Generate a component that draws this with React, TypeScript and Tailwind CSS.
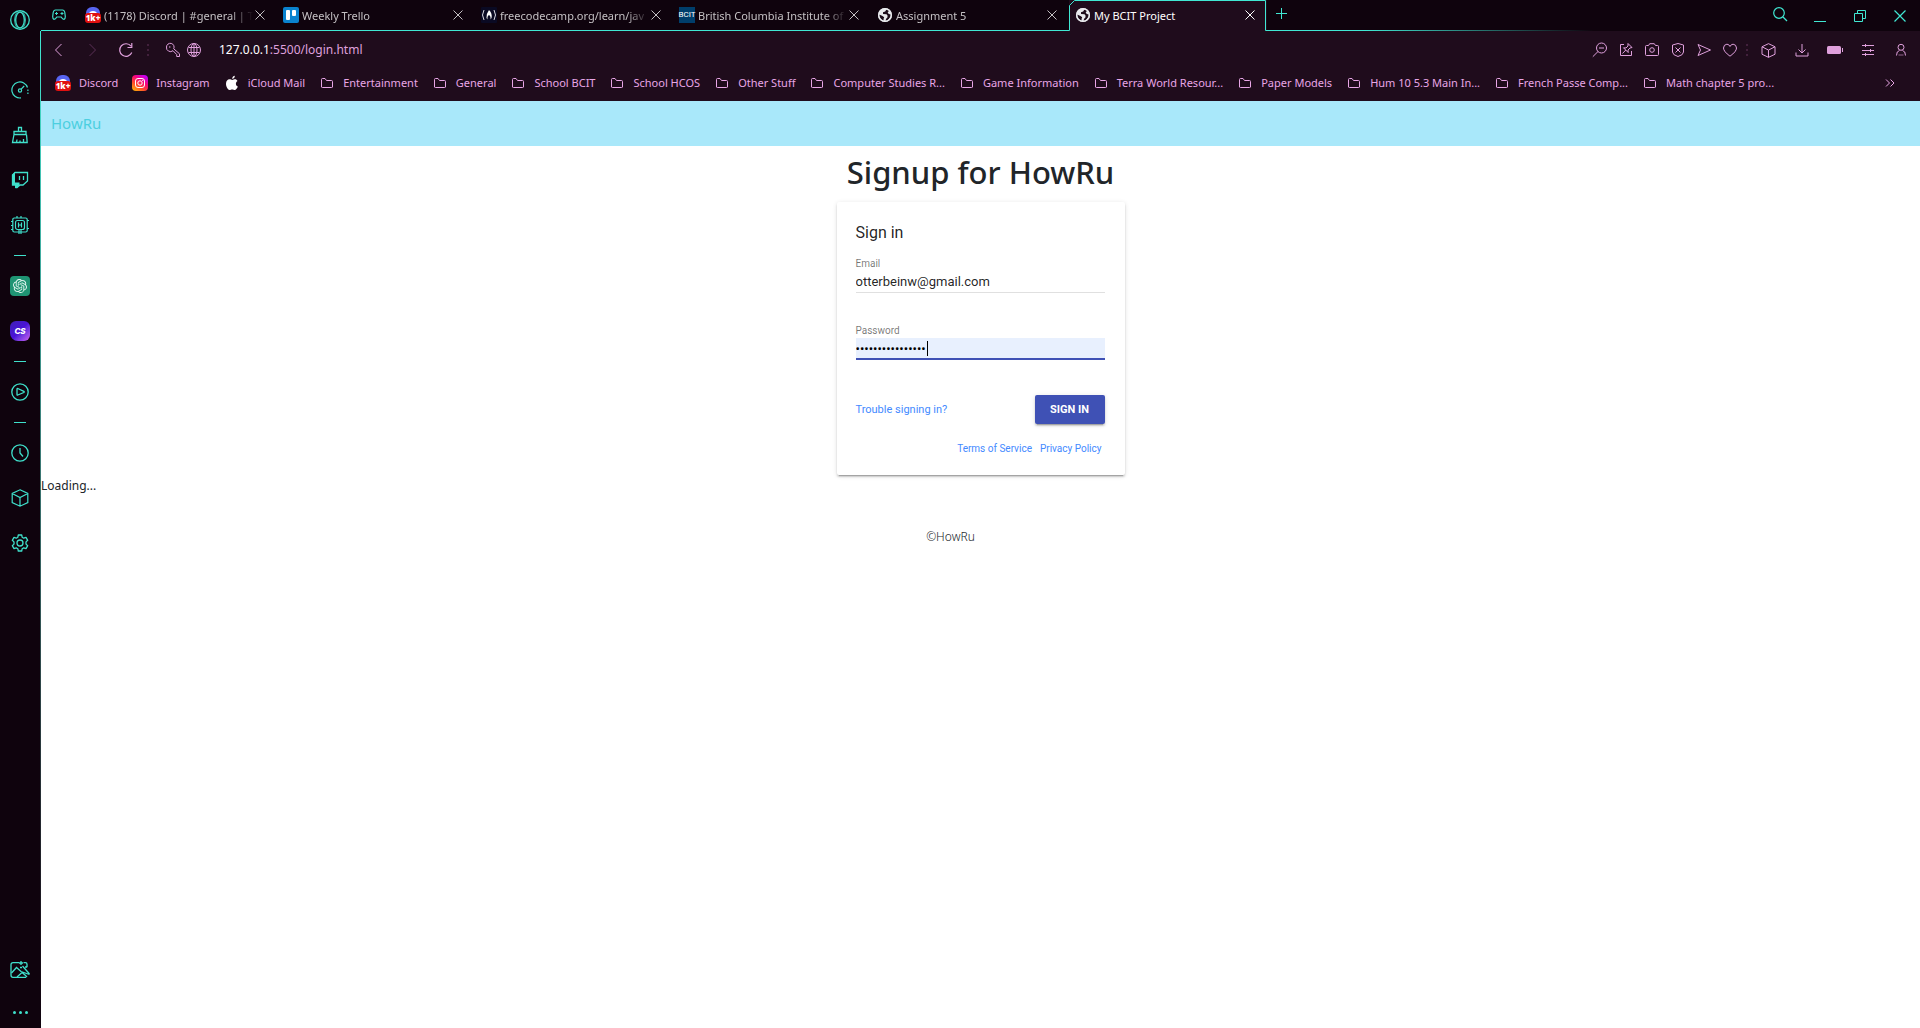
import React, { useState } from "react";
import { SiOpenai } from "react-icons/si";

type IconProps = { children: React.ReactNode; w?: number; h?: number; className?: string; sw?: number };

function Svg({ children, w = 16, h = 16, className = "", sw = 1 }: IconProps) {
  return (
    <svg
      width={w}
      height={h}
      viewBox={`0 0 ${w} ${h}`}
      fill="none"
      stroke="currentColor"
      strokeWidth={sw}
      className={`shrink-0 ${className}`}
      aria-hidden="true"
    >
      {children}
    </svg>
  );
}

/* ---------- Favicons ---------- */

function DiscordBadge() {
  return (
    <span className="relative block h-4 w-4 shrink-0">
      <Svg>
        <rect x="1" y="0" width="14" height="14" rx="6" fill="#5865f2" stroke="none" />
        <path d="M4 6.500Q4.500 4 8 4t4 2.500z" fill="#fff" stroke="none" />
        <rect x="0" y="6" width="16" height="10" rx="3" fill="#e01010" stroke="none" />
      </Svg>
      <span className="absolute inset-x-0 bottom-0 text-center font-['Open_Sans',sans-serif] text-[8px] leading-[10px] font-extrabold text-white">
        1k+
      </span>
    </span>
  );
}

function TrelloIcon() {
  return (
    <Svg>
      <rect width="16" height="16" rx="2" fill="#0a83cf" stroke="none" />
      <rect x="3" y="3" width="4" height="10" rx="1" fill="#fff" stroke="none" />
      <rect x="9" y="3" width="4" height="6" rx="1" fill="#fff" stroke="none" />
    </Svg>
  );
}

function CampIcon() {
  return (
    <Svg>
      <rect width="16" height="16" rx="1" fill="#0a0a23" stroke="none" />
      <path d="M3 3Q0 8 3 13M13 3q3 5 0 10" stroke="#dcdce4" />
      <path d="M8 3q3.500 3.500 2.500 8l-1 1.500Q10 9 8 8q-2 1-1.500 4.500L5.500 11Q5 7 8 3z" fill="#fff" stroke="none" />
    </Svg>
  );
}

function BcitIcon() {
  return (
    <span className="flex h-4 w-4 shrink-0 items-center justify-center bg-[#003e6b] font-['Roboto',sans-serif] text-[8px] leading-4 text-white">
      BCIT
    </span>
  );
}

function WorldIcon() {
  return (
    <Svg>
      <circle cx="8" cy="8" r="7" fill="#e8eaed" stroke="none" />
      <path
        d="M9.500 2.200 8.200 4.500 6 5.200V7l3.500.2 1 1.300v1.800L9 12l-.4 2 2.200-.8L13.500 10l.4-2.500-2-.4-1.200-1.400.8-1.400 1-.3Q11.200 2.700 9.500 2.200zM2.200 7.500 5.500 9l1.700 1.200L6.500 12l.3 1.800Q3 12.600 2.200 9z"
        fill="#1d0d1b"
        stroke="none"
      />
      <circle cx="8" cy="8" r="6.300" stroke="#e8eaed" strokeWidth="1.400" />
    </Svg>
  );
}

function InstagramIcon() {
  return (
    <Svg>
      <defs>
        <linearGradient id="insta" x1="0" y1="1" x2="0.700" y2="0">
          <stop offset="0" stopColor="#ffc400" />
          <stop offset="0.400" stopColor="#ff4a2c" />
          <stop offset="0.700" stopColor="#f5067a" />
          <stop offset="1" stopColor="#c800f0" />
        </linearGradient>
      </defs>
      <rect width="16" height="16" rx="4" fill="url(#insta)" stroke="none" />
      <rect x="3.500" y="3.500" width="9" height="9" rx="2.500" stroke="#fff" />
      <circle cx="8" cy="8" r="2.200" stroke="#fff" />
      <circle cx="10.700" cy="5.300" r="0.600" fill="#fff" stroke="none" />
    </Svg>
  );
}

function AppleIcon() {
  return (
    <Svg className="text-white">
      <path
        d="M11.200 4.200c-1.200 0-1.900.7-2.900.7s-1.700-.7-2.800-.7C3.700 4.200 2 5.800 2 8.800 2 11.800 4 15 5.600 15c.9 0 1.400-.6 2.600-.6s1.600.6 2.500.6c1.300 0 2.700-2 3.100-3.500-1.200-.5-1.900-1.500-1.900-2.800 0-1.200.6-2.100 1.600-2.800-.6-1.100-1.500-1.700-2.300-1.700zM10.800.8C9.300 1 8.100 2.400 8.200 3.900c1.500 0 2.700-1.500 2.600-3.100z"
        fill="currentColor"
        stroke="none"
      />
    </Svg>
  );
}

function FolderIcon() {
  return (
    <Svg>
      <path d="M2.500 12V4.500q0-1 1-1H6l1.500 2h5q1 0 1 1V12q0 .5-1 .5h-9q-1 0-1-.5z" />
    </Svg>
  );
}

/* ---------- Shared line icons ---------- */

function CubeIcon({ s = 16 }: { s?: number }) {
  return (
    <svg width={s} height={s} viewBox="0 0 18 18" fill="none" stroke="currentColor" strokeWidth="1.200" className="shrink-0" aria-hidden="true">
      <path d="M9 .8 16.800 4.500v9L9 17.200 1.200 13.500v-9zM1.200 4.500 9 8.500l7.800-4M9 8.500v8.700" />
    </svg>
  );
}

/* ---------- Sidebar ---------- */

function SideButton({ label, children }: { label: string; children: React.ReactNode }) {
  return (
    <button type="button" aria-label={label} className="flex h-[45px] w-full shrink-0 items-center justify-center">
      {children}
    </button>
  );
}

function Divider() {
  return (
    <div className="flex h-4 shrink-0 items-center justify-center">
      <div className="h-px w-3 bg-[#3fe0cb]" />
    </div>
  );
}

function Sidebar() {
  return (
    <aside className="flex w-10 shrink-0 flex-col bg-[#0f030d] text-[#3fe0cb]">
      <button type="button" aria-label="Opera menu" className="flex h-10 shrink-0 items-center justify-center">
        <Svg w={20} h={20} sw={1.3}>
          <circle cx="10" cy="10" r="9.300" />
          <ellipse cx="10" cy="10" rx="4.300" ry="8" />
          <path d="M8 .9Q4.500 4 4.500 10T8 19.100M12 .9Q15.500 4 15.500 10T12 19.100" strokeWidth="0.800" />
        </Svg>
      </button>
      <nav aria-label="Sidebar" className="flex flex-1 flex-col pt-[27px]">
        <SideButton label="GX Control">
          <Svg w={18} h={18} sw={1.2}>
            <path d="M10 16.900A8 8 0 1 1 16.500 6.500" />
            <path d="M16.900 8.500v5" strokeDasharray="1.500 1.500" />
            <circle cx="9" cy="9.500" r="1.600" />
            <path d="m10.200 8.200 3-3.200" />
          </Svg>
        </SideButton>
        <SideButton label="GX Cleaner">
          <Svg w={18} h={18} sw={1.3}>
            <path d="M7.500 5V1.500h3V5M3 8.500V5.500h12v3zM3 8.500 1.500 16.500h14.700L15.500 8.500M5.500 16.500l.5-3M9 16.500v-2M12.500 16.500V13" />
          </Svg>
        </SideButton>
        <SideButton label="Twitch">
          <Svg w={18} h={18} sw={1.3}>
            <path d="M4 1.500h12.500v8.500L12 14H9l-3 2.500H5V14H1.500V4z" />
            <path d="M1 4 4 1v10.500h4.500V14L6 17H4v-3H1z" fill="currentColor" stroke="none" />
            <path d="M8.500 5v4M12.500 5v4" />
          </Svg>
        </SideButton>
        <SideButton label="GX Mods">
          <Svg w={18} h={18} sw={1.2}>
            <rect x="1.800" y="2" width="14.400" height="14" rx="1.500" />
            <rect x="4.500" y="4.500" width="9" height="9" rx="2" />
            <path d="M7.500 6.500v5M10.500 6.500v5M7.500 9h3M6 0v2M10 0v2M0 5.500h2M0 9.500h2M0 13.500h2M16 4.500h2M16 12.500h2M8 13.500V18M10 13.500V18" />
          </Svg>
        </SideButton>
        <Divider />
        <SideButton label="ChatGPT">
          <span className="flex h-5 w-5 items-center justify-center rounded-[4px] bg-[#1f9473] text-[#e4f6f0]">
            <SiOpenai size={14} aria-hidden="true" />
          </span>
        </SideButton>
        <SideButton label="ChatSonic">
          <span className="flex h-5 w-5 items-center justify-center rounded-md rounded-bl-lg bg-linear-to-br from-[#3f1fb5] via-[#4a12d8] to-[#d05af0] font-['Inter',sans-serif] text-[8px] leading-5 font-extrabold text-white italic">
            CS
          </span>
        </SideButton>
        <Divider />
        <SideButton label="Player">
          <Svg w={18} h={18} sw={1.3}>
            <circle cx="9" cy="9" r="8.200" />
            <path d="M6 6q0-.8.800-.5l6 2.800q.9.600 0 1.200l-6 2.500Q6 12.400 6 11.500z" />
          </Svg>
        </SideButton>
        <Divider />
        <SideButton label="History">
          <Svg w={18} h={18} sw={1.3}>
            <circle cx="9" cy="9" r="8.200" />
            <path d="M9 4v5l3 3.500" />
          </Svg>
        </SideButton>
        <SideButton label="Extensions">
          <CubeIcon s={18} />
        </SideButton>
        <SideButton label="Settings">
          <Svg w={18} h={18} sw={1.3}>
            <path
              d="M7.300 1h3.400l.5 2.300 1.500.9 2.300-.8 1.700 2.900-1.700 1.600v2.200l1.700 1.600-1.700 2.900-2.300-.8-1.500.9-.5 2.300H7.300l-.5-2.300-1.500-.9-2.300.8-1.700-2.900L3 10.100V7.900L1.300 6.300 3 3.400l2.300.8 1.500-.9z"
              strokeLinejoin="round"
            />
            <circle cx="9" cy="9" r="3" />
          </Svg>
        </SideButton>
        <div className="flex-1" />
        <SideButton label="Image generator">
          <Svg w={20} h={18} sw={1.3}>
            <path d="M9 1.700H3q-2 0-2 2v10.600q0 2 2 2h13M13.500 1.700h2q1.500 0 1.500 1.500v3" />
            <path d="m1.500 12 5-5.500 4.500 4 8.500 3M7 16l5-4.500 3 2.500 2 2M11 0v4M9 2h4M12.500 5l7 8M10 6.500h2M15 6h2" />
          </Svg>
        </SideButton>
        <button type="button" aria-label="Sidebar setup" className="mt-1 flex h-8 shrink-0 items-center justify-center gap-[3px]">
          <span className="h-[3px] w-[3px] rounded-full bg-current" />
          <span className="h-[3px] w-[3px] rounded-full bg-current" />
          <span className="h-[3px] w-[3px] rounded-full bg-current" />
        </button>
      </nav>
    </aside>
  );
}

/* ---------- Tab bar ---------- */

const tabs = [
  { title: "(1178) Discord | #general | T", icon: <DiscordBadge /> },
  { title: "Weekly Trello", icon: <TrelloIcon /> },
  { title: "freecodecamp.org/learn/jav", icon: <CampIcon /> },
  { title: "British Columbia Institute of", icon: <BcitIcon /> },
  { title: "Assignment 5", icon: <WorldIcon /> },
  { title: "My BCIT Project", icon: <WorldIcon />, active: true },
];

function CloseIcon() {
  return (
    <Svg w={12} h={12}>
      <path d="m1.500 1.500 9 9M10.500 1.500l-9 9" />
    </Svg>
  );
}

function TabBar() {
  return (
    <header className="flex h-[31px] shrink-0 bg-[#0f030d] text-[11px] leading-4">
      <button
        type="button"
        aria-label="GX Corner"
        className="flex w-[38px] items-center border-b border-[#40e8d3] pl-[11px] text-[#3fe0cb]"
      >
        <Svg w={14} h={12} sw={1.2}>
          <path d="M3.500 1h7q1.800 0 2.300 2.500l.5 4q.1 2.500-1.300 2.800-1.500 0-2.800-2.300H4.800Q3.500 10.300 2 10.300.6 10 .7 7.500l.5-4Q1.700 1 3.500 1z" />
          <path d="M3 4.500h3M4.500 3v3M8.500 4.500h3M10 3v3" strokeWidth="1" />
        </Svg>
      </button>
      {tabs.map((t) => (
        <div
          key={t.title}
          className={
            t.active
              ? "relative flex w-[198px] items-center bg-[#1f0c1c] pr-[11px] pb-px pl-[6px] text-white"
              : "flex w-[198px] items-center border-b border-[#40e8d3] pr-[11px] pl-[6px] text-[#c4c0c3]"
          }
        >
          {t.active && (
            <svg
              className="absolute inset-0 text-[#40e8d3]"
              width="198"
              height="31"
              viewBox="0 0 198 31"
              fill="none"
              stroke="currentColor"
              aria-hidden="true"
            >
              <path d="M0 30.500h.5V5.500L5.500.5h191v30H198" />
            </svg>
          )}
          {t.icon}
          <button
            type="button"
            className={
              t.active
                ? "ml-[3px] min-w-0 flex-1 overflow-hidden pt-px text-left whitespace-nowrap"
                : "ml-[3px] min-w-0 flex-1 overflow-hidden mask-r-from-85% mask-r-to-100% pt-px text-left whitespace-nowrap"
            }
          >
            {t.title}
          </button>
          <button type="button" aria-label={`Close ${t.title}`} className="relative ml-px">
            <CloseIcon />
          </button>
        </div>
      ))}
      <div className="flex flex-1 bg-[linear-gradient(to_right,#40e8d3_0,#40e8d3_15%,transparent_50%)] bg-[length:100%_1px] bg-bottom bg-no-repeat text-[#40e8d3]">
        <button type="button" aria-label="New tab" className="flex w-7 items-center justify-center pb-1">
          <Svg w={11} h={11}>
            <path d="M5.500 0v11M0 5.500h11" />
          </Svg>
        </button>
        <div className="flex-1" />
        <button type="button" aria-label="Search tabs" className="flex w-10 items-center justify-center pb-1">
          <Svg w={16} h={16} sw={1.2}>
            <circle cx="7" cy="7" r="5.300" />
            <path d="m11 11 4 4" />
          </Svg>
        </button>
        <button type="button" aria-label="Minimize" className="flex w-10 items-center justify-center">
          <Svg w={12} h={12}>
            <path d="M0 11.500h12" />
          </Svg>
        </button>
        <button type="button" aria-label="Restore" className="flex w-10 items-center justify-center">
          <Svg w={12} h={12}>
            <path d="M.5 3.500h8v8h-8zM3.500 3.500v-3h8v8h-3" />
          </Svg>
        </button>
        <button type="button" aria-label="Close window" className="flex w-10 items-center justify-center">
          <Svg w={12} h={12} sw={1.2}>
            <path d="m.5.5 11 11M11.500.5l-11 11" />
          </Svg>
        </button>
      </div>
    </header>
  );
}

/* ---------- Toolbar ---------- */

function Dots() {
  return (
    <span className="flex flex-col gap-[3px]">
      <span className="h-[2px] w-[2px] bg-[#42203c]" />
      <span className="h-[2px] w-[2px] bg-[#42203c]" />
      <span className="h-[2px] w-[2px] bg-[#42203c]" />
    </span>
  );
}

const pageActions: { label: string; icon: React.ReactNode }[] = [
  {
    label: "Zoom",
    icon: (
      <>
        <circle cx="9.500" cy="6" r="5" />
        <path d="M7 6h5M6 9.500.8 14.700" />
      </>
    ),
  },
  {
    label: "Pinboards",
    icon: (
      <>
        <path d="M6 2.500H2.500v11h11V9" />
        <path d="m10 1.500 4 4-2 .5-2 2 .2 2.500-4.700-4.700L8 6l2-2zM7.800 8 4.500 11.500" />
      </>
    ),
  },
  {
    label: "Snapshot",
    icon: (
      <>
        <path d="M2.500 3.500h2l1.200-1.800h4.600l1.200 1.800h2q1 0 1 1V12.500q0 1-1 1h-11q-1 0-1-1v-8q0-1 1-1z" />
        <circle cx="8" cy="8" r="2.300" />
      </>
    ),
  },
  {
    label: "Ad blocker",
    icon: (
      <>
        <path d="M8 1.500 13.500 3v7q0 3-5.500 4.500Q2.500 13 2.500 10V3z" />
        <path d="m5.500 5.500 5 5M10.500 5.500l-5 5" />
      </>
    ),
  },
  { label: "My Flow", icon: <path d="M2 2.500 14.500 8 2 13.500 4.500 8z" /> },
  {
    label: "Bookmark",
    icon: <path d="M8 14.200Q1.500 9.500 1.500 6 1.700 2.500 4.900 2.200 7 2.200 8 4.500 9 2.200 11.100 2.200 14.300 2.500 14.500 6 14.500 9.500 8 14.200z" />,
  },
];

const browserActions: { label: string; icon: React.ReactNode }[] = [
  { label: "Extensions", icon: <CubeIcon s={15} /> },
  {
    label: "Downloads",
    icon: (
      <Svg>
        <path d="M2 10.500v3.500h12v-3.500M8 2v8M4.500 7.500 8 11l3.500-3.500" />
      </Svg>
    ),
  },
  {
    label: "Battery saver",
    icon: (
      <Svg>
        <rect x="0" y="4" width="14" height="8" rx="1.500" fill="currentColor" stroke="none" />
        <path d="M15.500 6v4" />
      </Svg>
    ),
  },
  {
    label: "Easy setup",
    icon: (
      <Svg>
        <path d="M2 3.500h12M2 8.500h12M2 12.500h12M5.500 2v3M10.500 7v3M5.500 11v3" />
      </Svg>
    ),
  },
  {
    label: "Profile",
    icon: (
      <Svg>
        <circle cx="8" cy="5.300" r="3" />
        <path d="M3.500 13.500q0-4.500 3-5M12.500 13.500q0-4.500-3-5" />
        <path d="M5.500 13h5" strokeWidth="0.600" />
      </Svg>
    ),
  },
];

function Toolbar() {
  return (
    <div className="flex h-[38px] shrink-0 items-center bg-[#1f0c1c] pr-[3px] text-[#dfa0dc]">
      <button type="button" aria-label="Back" className="flex w-[34px] justify-center">
        <Svg>
          <path d="M11.500 2 5.500 8l6 6" />
        </Svg>
      </button>
      <button type="button" aria-label="Forward" className="flex w-[34px] justify-center text-[#5b3057]">
        <Svg>
          <path d="m5.500 2 6 6-6 6" />
        </Svg>
      </button>
      <button type="button" aria-label="Reload" className="flex w-[34px] justify-center">
        <Svg sw={1.2}>
          <path d="M13.800 10.500A6.300 6.300 0 1 1 13 4.200M13.800 1v4.500H9.500" />
        </Svg>
      </button>
      <span className="ml-1">
        <Dots />
      </span>
      <button type="button" aria-label="Saved passwords" className="ml-4">
        <Svg>
          <path d="M1.500 5a3.800 3.800 0 1 1 7.200 1.800l5.800 5v2.700h-2.800v-2L8 8.700A4 4 0 0 1 1.500 5z" />
          <circle cx="4.800" cy="5" r="0.700" fill="currentColor" stroke="none" />
        </Svg>
      </button>
      <button type="button" aria-label="Site information" className="ml-[5px]">
        <Svg>
          <circle cx="8" cy="8" r="6.500" />
          <ellipse cx="8" cy="8" rx="3" ry="6.500" />
          <path d="M2.500 5.500h11M2.500 10.500h11M8 1.500v13" />
        </Svg>
      </button>
      <div className="ml-[17px] min-w-0 flex-1 text-[12px] leading-5">
        <a href="#address" className="whitespace-nowrap">
          <span className="text-white">127.0.0.1</span>:5500/login.html
        </a>
      </div>
      {pageActions.map((a) => (
        <button key={a.label} type="button" aria-label={a.label} className="flex w-[26px] justify-center">
          <Svg>{a.icon}</Svg>
        </button>
      ))}
      <span className="mr-1 ml-[3px]">
        <Dots />
      </span>
      {browserActions.map((a) => (
        <button key={a.label} type="button" aria-label={a.label} className="flex w-[33px] justify-center">
          {a.icon}
        </button>
      ))}
    </div>
  );
}

/* ---------- Bookmarks ---------- */

const bookmarks: { name: string; icon?: React.ReactNode }[] = [
  { name: "Discord", icon: <DiscordBadge /> },
  { name: "Instagram", icon: <InstagramIcon /> },
  { name: "iCloud Mail", icon: <AppleIcon /> },
  { name: "Entertainment" },
  { name: "General" },
  { name: "School BCIT" },
  { name: "School HCOS" },
  { name: "Other Stuff" },
  { name: "Computer Studies R..." },
  { name: "Game Information" },
  { name: "Terra World Resour..." },
  { name: "Paper Models" },
  { name: "Hum 10 5.3 Main In..." },
  { name: "French Passe Comp..." },
  { name: "Math chapter 5 pro..." },
];

function Bookmarks() {
  return (
    <nav
      aria-label="Bookmarks"
      className="flex h-8 shrink-0 items-center bg-[#1f0c1c] pr-6 pb-1 pl-[14px] text-[11px] leading-4 text-[#e8a6e6]"
    >
      <div className="flex min-w-0 flex-1 gap-[14px]">
        {bookmarks.map((b) => (
          <a key={b.name} href="#bookmark" className="flex shrink-0 items-center gap-2 whitespace-nowrap">
            {b.icon ?? <FolderIcon />}
            {b.name}
          </a>
        ))}
      </div>
      <button type="button" aria-label="More bookmarks">
        <Svg w={12} h={12}>
          <path d="m2 2.500 3.500 3.500L2 9.500M6.500 2.500 10 6 6.500 9.500" />
        </Svg>
      </button>
    </nav>
  );
}

/* ---------- Page ---------- */

function SignInCard() {
  const [email, setEmail] = useState("otterbeinw@gmail.com");
  const [password, setPassword] = useState("howruhowruhowru1");
  return (
    <form
      onSubmit={(e) => e.preventDefault()}
      className="mx-auto mt-[10px] w-72 rounded-[2px] bg-white pt-[21px] pr-5 pb-[19px] pl-[19px] font-['Roboto',sans-serif] shadow-[0_2px_2px_0_rgba(0,0,0,0.14),0_3px_1px_-2px_rgba(0,0,0,0.2),0_1px_5px_0_rgba(0,0,0,0.12)]"
    >
      <h2 className="text-[16px] leading-5 text-black/87">Sign in</h2>
      <label htmlFor="email" className="mt-[15px] block text-[10px] leading-3 text-black/54">
        Email
      </label>
      <input
        id="email"
        type="email"
        value={email}
        onChange={(e) => setEmail(e.target.value)}
        className="block h-[23px] w-full border-b border-black/12 text-[13px] leading-5 text-black/87 outline-none"
      />
      <label htmlFor="password" className="mt-8 block text-[10px] leading-3 text-black/54">
        Password
      </label>
      <div className="relative mt-px">
        <input
          id="password"
          type="password"
          value={password}
          onChange={(e) => setPassword(e.target.value)}
          className="block h-[22px] w-full border-b-2 border-[#3f51b5] bg-[#e8f0fe] text-[13px] leading-5 text-black caret-transparent outline-none"
        />
        <span className="absolute top-[3px] left-[71px] h-[15px] w-px bg-black" />
      </div>
      <div className="mt-[35px] flex items-center justify-between">
        <a href="#recover" className="text-[11px] leading-4 text-[#448aff]">
          Trouble signing in?
        </a>
        <button
          type="submit"
          className="h-[29px] w-[70px] rounded-[2px] bg-[#3f51b5] text-[11px] leading-4 font-bold text-white shadow-[0_2px_2px_0_rgba(0,0,0,0.14),0_3px_1px_-2px_rgba(0,0,0,0.2),0_1px_5px_0_rgba(0,0,0,0.12)]"
        >
          SIGN IN
        </button>
      </div>
      <div className="mt-[18px] flex justify-end gap-2 pr-[3px] text-[10px] leading-[14px] text-[#448aff]">
        <a href="#terms">Terms of Service</a>
        <a href="#privacy">Privacy Policy</a>
      </div>
    </form>
  );
}

function Page() {
  return (
    <main className="flex-1 bg-white text-[#212529]">
      <nav aria-label="Site" className="flex h-[45px] items-center bg-[#a9e8fa] px-[10px] pb-[2px]">
        <a href="#home" className="text-[15px] leading-6 text-[#4ccfe0]">
          HowRu
        </a>
      </nav>
      <h1 className="pt-[6px] text-center text-[31px] leading-[40px] font-medium">Signup for HowRu</h1>
      <SignInCard />
      <p className="text-[12px] leading-[22px]">Loading...</p>
      <footer className="mt-[30px] pr-[60px] text-center text-[12px] leading-5 font-light">©HowRu</footer>
    </main>
  );
}

export default function App() {
  return (
    <div className="flex min-h-screen bg-[#0f030d] font-['Noto_Sans','Open_Sans',sans-serif]">
      <Sidebar />
      <div className="w-px shrink-0 bg-linear-to-b from-[#0f030d] from-3% via-[#40e8d3] via-3% to-[#0f030d]" />
      <div className="flex min-w-0 flex-1 flex-col">
        <TabBar />
        <Toolbar />
        <Bookmarks />
        <Page />
      </div>
    </div>
  );
}
